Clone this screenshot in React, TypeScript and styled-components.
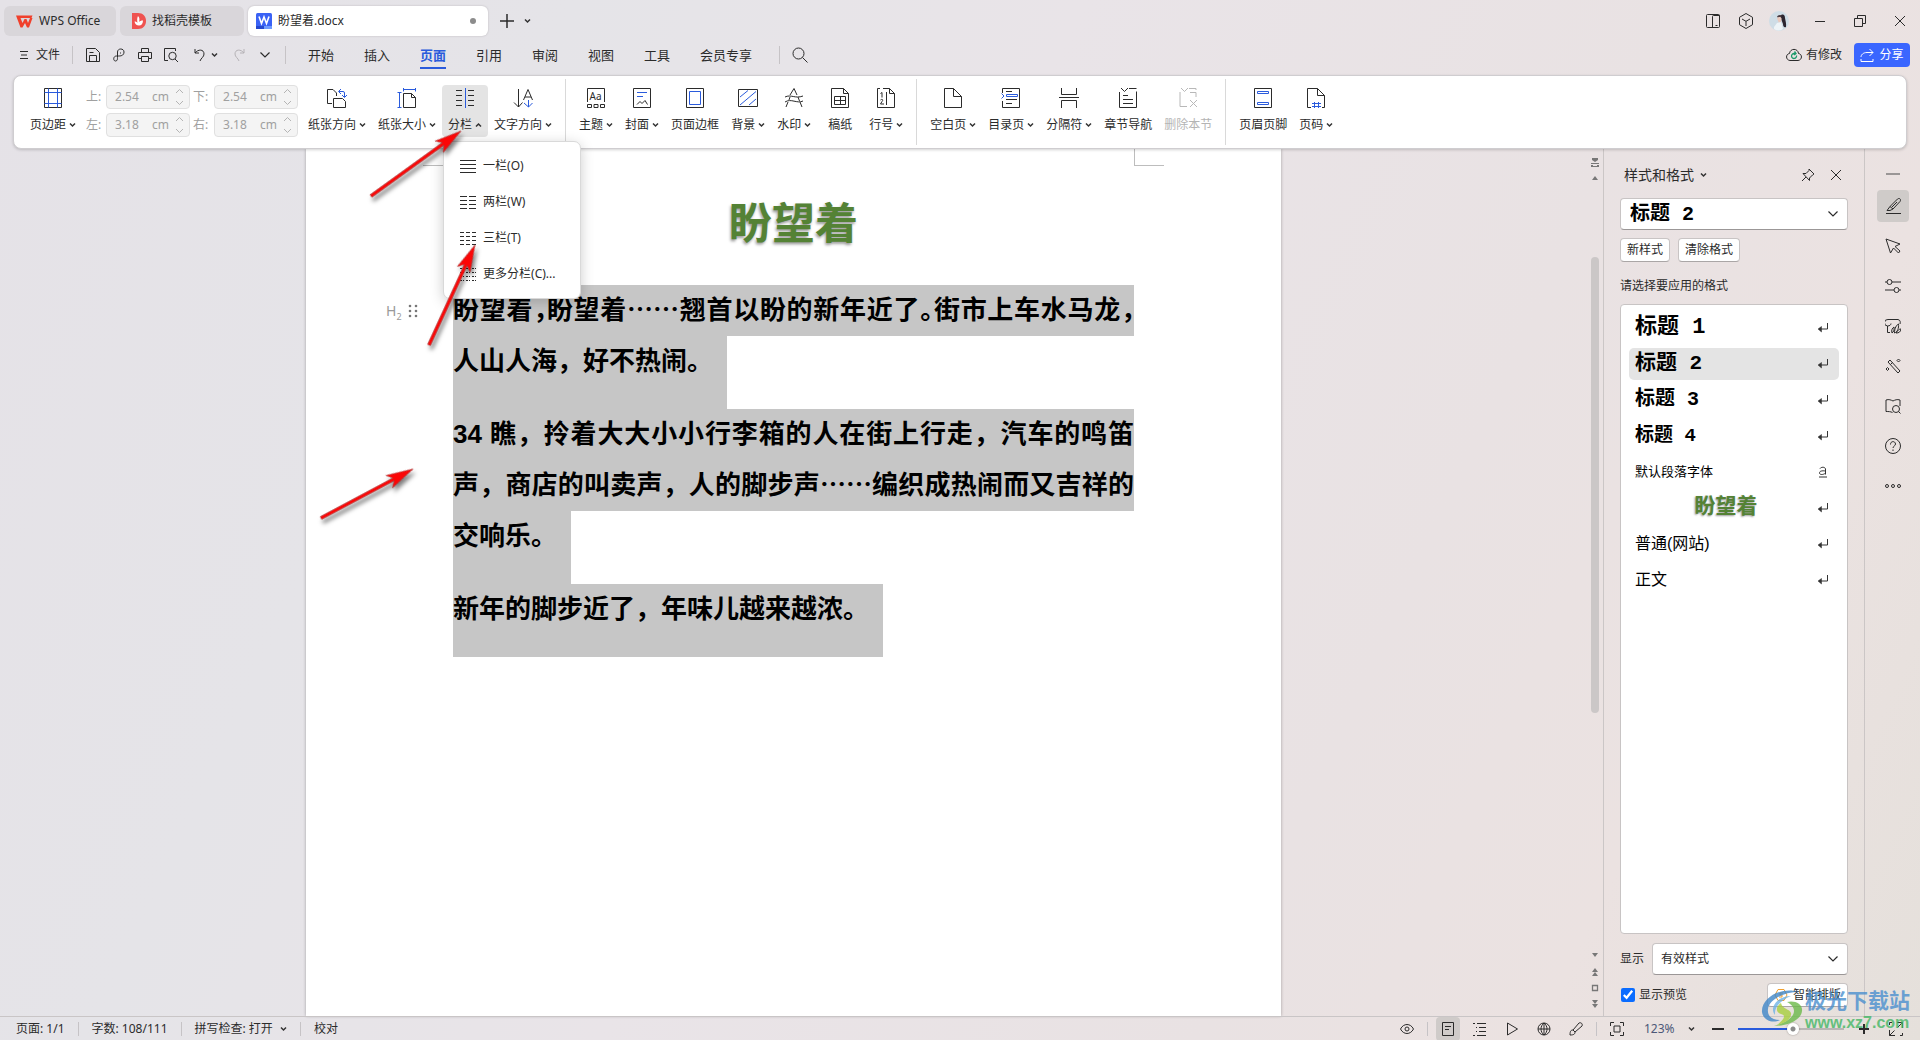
import React from "react";
import styled, { createGlobalStyle, css } from "styled-components";

const UI = `"Noto Sans", "Noto Sans CJK SC", sans-serif`;
const INK = "#2b2b2b";
const BLUE = "#2a5bdc";

const GlobalStyle = createGlobalStyle`
  * { box-sizing: border-box; }
  body { margin: 0; font-family: ${UI}; font-size: 12px; line-height: 16px; color: ${INK}; }
  button, input, select { font: inherit; color: inherit; margin: 0; }
  button { border: 0; background: none; padding: 0; cursor: pointer; }
  svg { display: block; flex: none; }
`;

/* ---------- shell ---------- */
const Shell = styled.div`
  position: relative;
  display: flex;
  flex-direction: column;
  height: 100vh;
  overflow: hidden;
  background: linear-gradient(115deg, #e5e2e7 0%, #e5e4e8 24%, #e9e4e8 45%, #e9e2e3 70%, #ebe2e1 84%, #e5e0db 100%);
`;
const Spacer = styled.div`flex: 1;`;
const Row = styled.div<{ $gap?: number }>`
  display: flex;
  align-items: center;
  gap: ${(p) => p.$gap ?? 0}px;
`;

/* ---------- title bar ---------- */
const TitleBar = styled.header`
  display: flex;
  align-items: center;
  height: 42px;
  padding-left: 4px;
`;
const FileTab = styled.button<{ $active?: boolean; $width: number }>`
  display: flex;
  align-items: center;
  gap: 6px;
  width: ${(p) => p.$width}px;
  height: 30px;
  margin-right: 4px;
  padding: 0 12px 0 ${(p) => (p.$active ? 8 : 12)}px;
  border-radius: 6px;
  background: ${(p) => (p.$active ? "#fff" : "#d9d6da")};
  box-shadow: ${(p) => (p.$active ? "0 0 2px #b5b2b6" : "none")};
`;
const Dot = styled.span`
  width: 6px;
  height: 6px;
  border-radius: 50%;
  background: #8c8c8c;
`;
const IconButton = styled.button<{ $width?: number; $height?: number; $on?: boolean }>`
  display: flex;
  align-items: center;
  justify-content: center;
  gap: 4px;
  width: ${(p) => p.$width ?? 24}px;
  height: ${(p) => p.$height ?? 24}px;
  border-radius: 4px;
  background: ${(p) => (p.$on ? "#cfcbc9" : "none")};
`;
const AccountTools = styled(Row)`margin-right: 5px;`;

/* ---------- menu row ---------- */
const MenuBar = styled.nav`
  display: flex;
  align-items: center;
  height: 33px;
  padding: 0 10px 7px 12px;
`;
const FileMenu = styled.button`
  display: flex;
  align-items: center;
  gap: 8px;
  width: 53px;
  padding-left: 8px;
`;
const Divider = styled.i<{ $height?: number; $space?: number }>`
  width: 1px;
  height: ${(p) => p.$height ?? 18}px;
  margin: 0 ${(p) => p.$space ?? 7}px;
  background: #c6c3c6;
`;
const MenuTab = styled.button<{ $active?: boolean }>`
  height: 28px;
  margin: 0 15px;
  padding-top: 2px;
  font-size: 13px;
  border-bottom: 2px solid ${(p) => (p.$active ? BLUE : "transparent")};
  color: ${(p) => (p.$active ? BLUE : INK)};
  font-weight: ${(p) => (p.$active ? 700 : 400)};
`;
const CloudState = styled.button`
  display: flex;
  align-items: center;
  gap: 4px;
  margin-right: 12px;
`;
const ShareButton = styled.button`
  display: flex;
  align-items: center;
  justify-content: center;
  gap: 5px;
  width: 56px;
  height: 24px;
  border-radius: 4px;
  background: #3a66ff;
  color: #fff;
`;

/* ---------- ribbon ---------- */
const Ribbon = styled.section`
  position: relative;
  z-index: 3;
  display: flex;
  height: 74px;
  margin: 0 13px;
  padding: 3px 10px;
  border: 1px solid #cfcdd0;
  border-radius: 8px;
  background: #fff;
  box-shadow: 0 1px 3px rgba(0, 0, 0, 0.18);
`;
const RibbonGroup = styled.div`
  display: flex;
  align-items: flex-start;
  padding: 6px 7px 0;
  border-right: 1px solid #d9d9d9;
  &:first-child { padding-left: 0; }
  &:last-child { border-right: 0; }
`;
const RibbonButton = styled.button<{ $on?: boolean; $off?: boolean }>`
  display: flex;
  flex-direction: column;
  align-items: center;
  gap: 9px;
  min-width: 46px;
  height: 52px;
  padding: 3px 6px 0;
  border-radius: 4px;
  background: ${(p) => (p.$on ? "#e4e4e4" : "none")};
  color: ${(p) => (p.$off ? "#b4b4b4" : INK)};
  white-space: nowrap;
`;
const MenuAnchor = styled.div`position: relative;`;
const MarginGrid = styled.div`
  display: grid;
  grid-template-columns: 17px 84px 18px 84px;
  column-gap: 3px;
  row-gap: 4px;
  align-items: center;
  width: 220px;
  padding-left: 4px;
  color: #a0a0a0;
`;
const Measure = styled.span`
  display: flex;
  align-items: center;
  height: 24px;
  padding: 0 5px 0 8px;
  border: 1px solid #e0e0e0;
  border-radius: 4px;
  background: #f4f4f4;
  input {
    width: 37px;
    padding: 0;
    border: 0;
    background: none;
  }
`;

/* ---------- drop-down ---------- */
const Dropdown = styled.ul`
  position: absolute;
  top: 56px;
  left: 1px;
  width: 138px;
  margin: 0;
  padding: 6px 0;
  list-style: none;
  border-radius: 7px;
  border: 1px solid #d9d9d9;
  background: #fff;
  box-shadow: 0 3px 14px rgba(0, 0, 0, 0.2);
`;
const DropdownItem = styled.button`
  display: flex;
  align-items: center;
  gap: 7px;
  width: 100%;
  height: 36px;
  padding-left: 16px;
`;

/* ---------- work area ---------- */
const Main = styled.main`
  display: flex;
  flex: 1;
  min-height: 0;
`;
const Canvas = styled.div`
  display: flex;
  flex: 1;
  justify-content: center;
  min-width: 0;
`;
const Page = styled.article`
  width: 975px;
  background: #fff;
  box-shadow: 0 0 3px rgba(0, 0, 0, 0.3);
`;
const CropRow = styled.div`
  display: flex;
  justify-content: space-between;
  padding: 0 117px;
`;
const CropMark = styled.i<{ $side: "left" | "right" }>`
  width: 30px;
  height: 17px;
  border-bottom: 1px solid #bdbdbd;
  ${(p) => (p.$side === "left" ? css`border-right: 1px solid #bdbdbd;` : css`border-left: 1px solid #bdbdbd;`)}
`;
const DocTitle = styled.h1`
  margin: 0;
  padding-bottom: 11px;
  font: 700 43px/108px "Noto Sans CJK SC", sans-serif;
  text-align: center;
  color: #548235;
  text-shadow: -1px 2px 3px rgba(0, 0, 0, 0.4);
`;
const DocBody = styled.div`
  display: grid;
  grid-template-columns: 147px 681px;
`;
const Gutter = styled.div`
  display: flex;
  align-items: center;
  gap: 6px;
  height: 51px;
  padding-left: 80px;
  font-size: 14px;
  color: #9a9a9a;
  sub { font-size: 9px; line-height: 0; }
`;
const Paragraph = styled.p`
  display: flex;
  flex-direction: column;
  align-items: flex-start;
  margin: 0;
  font: 700 26px/51px "Liberation Sans", "Noto Sans CJK SC", sans-serif;
  color: #000;
`;
const Line = styled.span<{ $last?: boolean }>`
  background: #c6c6c6;
  white-space: nowrap;
  ${(p) => (p.$last ? css`padding: 0 14px 22px 0;` : css`width: 100%; text-align-last: justify;`)}
`;
const HalfMark = styled.span`font-feature-settings: "halt";`;
const Ellipsis = styled.span`
  font-family: "Noto Sans CJK SC", sans-serif;
  line-height: 1;
`;

const ScrollRail = styled.div`
  display: flex;
  flex-direction: column;
  align-items: center;
  width: 16px;
  padding: 9px 0 7px;
`;
const ScrollThumb = styled.div`
  width: 8px;
  height: 456px;
  margin: 75px 0 auto;
  border-radius: 4px;
  background: #cbc7c7;
`;

/* ---------- style pane ---------- */
const Pane = styled.aside`
  display: flex;
  flex-direction: column;
  width: 262px;
  padding: 14px 16px 9px;
  border-left: 1px solid #cbc6c6;
  border-right: 1px solid #cbc6c6;
`;
const PaneHeader = styled.div`
  display: flex;
  align-items: center;
  gap: 4px;
  height: 24px;
  margin-bottom: 11px;
  padding-left: 4px;
  font-size: 14px;
`;
const PaneTitle = styled.button`
  display: flex;
  align-items: center;
  gap: 6px;
`;
const SelectBox = styled.div<{ $large?: boolean }>`
  position: relative;
  display: flex;
  flex: ${(p) => (p.$large ? "none" : 1)};
  height: 32px;
  select {
    width: 100%;
    padding: 0 28px 0 ${(p) => (p.$large ? 9 : 8)}px;
    border: 1px solid #c8c4c4;
    border-bottom-color: #9b9797;
    border-radius: 4px;
    background: #fff;
    appearance: none;
    ${(p) => p.$large && css`font: 700 20px "Liberation Mono", "Noto Sans CJK SC", sans-serif; color: #000;`}
  }
  svg { position: absolute; right: 9px; top: 10px; pointer-events: none; }
`;
const ActionRow = styled.div`
  display: flex;
  gap: 8px;
  margin-top: 8px;
`;
const SmallButton = styled.button`
  display: flex;
  align-items: center;
  gap: 5px;
  height: 24px;
  padding: 0 6px;
  border: 1px solid #c8c4c4;
  border-bottom-color: #aaa6a6;
  border-radius: 4px;
  background: #fff;
`;
const PaneCaption = styled.div`
  margin: 14px 0 8px;
  line-height: 20px;
`;
const StyleList = styled.ul`
  display: flex;
  flex-direction: column;
  flex: 1;
  gap: 4px;
  margin: 0 0 9px;
  padding: 7px 8px;
  list-style: none;
  border: 1px solid #c8c4c4;
  border-radius: 4px;
  background: #fff;
`;
const StyleItem = styled.button<{ $size: number; $bold?: boolean; $on?: boolean; $green?: boolean }>`
  display: flex;
  align-items: center;
  justify-content: space-between;
  width: 100%;
  height: 32px;
  padding: 0 10px 0 6px;
  border-radius: 5px;
  background: ${(p) => (p.$on ? "#e4e4e4" : "none")};
  font: ${(p) => (p.$bold ? 700 : 400)} ${(p) => p.$size}px/32px ${(p) => (p.$bold ? '"Liberation Mono"' : '"Liberation Sans"')}, "Noto Sans CJK SC", sans-serif;
  color: ${(p) => (p.$green ? "#548235" : "#000")};
  text-shadow: ${(p) => (p.$green ? "-1px 1px 2px rgba(0,0,0,.4)" : "none")};
  span { flex: 1; text-align: ${(p) => (p.$green ? "center" : "left")}; }
`;
const CheckLabel = styled.label`
  display: flex;
  align-items: center;
  gap: 4px;
  input { width: 14px; height: 14px; margin: 0 0 0 1px; accent-color: #0a6cff; }
`;
const ShowRow = styled(Row)`margin-bottom: 8px;`;
const SideBar = styled.aside`
  display: flex;
  flex-direction: column;
  align-items: center;
  gap: 8px;
  width: 55px;
  padding-top: 17px;
`;

/* ---------- status bar ---------- */
const StatusBar = styled.footer`
  display: flex;
  align-items: center;
  height: 24px;
  padding: 0 12px 0 16px;
  border-top: 1px solid #c9c5c6;
`;
const SpellButton = styled.button`
  display: flex;
  align-items: center;
  gap: 7px;
`;
const ZoomSelect = styled.div`
  position: relative;
  width: 61px;
  select { width: 100%; padding: 0 0 0 7px; border: 0; background: none; appearance: none; color: #4c5878; }
  svg { position: absolute; right: 3px; top: 5px; pointer-events: none; }
`;
const ZoomRange = styled.input`
  width: 106px;
  height: 12px;
  appearance: none;
  background: linear-gradient(to right, #2a5bdc 52%, #b9b5b4 52%) center / 100% 2px no-repeat;
  &::-webkit-slider-thumb {
    appearance: none;
    width: 12px;
    height: 12px;
    border-radius: 50%;
    background: radial-gradient(circle, #8b8b8b 0 2px, #fff 3px);
    box-shadow: 0 0 2px rgba(0, 0, 0, 0.4);
  }
`;

/* ---------- overlays ---------- */
const Arrows = styled.svg`
  position: absolute;
  top: 0;
  left: 0;
  z-index: 5;
  overflow: visible;
  pointer-events: none;
  filter: drop-shadow(2px 4px 2px rgba(0, 0, 0, 0.5));
`;
const Watermark = styled.div`
  position: absolute;
  right: 10px;
  bottom: 8px;
  z-index: 6;
  display: flex;
  align-items: center;
  gap: 2px;
  opacity: 0.8;
  pointer-events: none;
`;
const WatermarkText = styled.div`
  display: flex;
  flex-direction: column;
  b { font-size: 21px; line-height: 28px; color: #4b8fcf; }
  span { font: 700 16px/18px "Liberation Sans", sans-serif; color: #45b866; }
`;

/* ---------- icons ---------- */
type IcoProps = { children: React.ReactNode; size?: number; color?: string; box?: number };
const Ico = ({ children, size = 20, box, color = INK }: IcoProps) => (
  <svg width={size} height={size} viewBox={`0 0 ${box ?? size} ${box ?? size}`} fill="none" stroke={color} aria-hidden="true">
    {children}
  </svg>
);
const Caret = ({ up = false, color = "#333" }) => (
  <svg width="7" height="6" viewBox="0 0 7 6" fill="none" stroke={color} strokeWidth="1.5" aria-hidden="true">
    <path d={up ? "M1 4.5 3.5 2 6 4.5" : "M1 1.5 3.5 4 6 1.5"} />
  </svg>
);
const Chevron = () => <Ico size={12}><path d="M1.5 3.5 6 8l4.5-4.500" strokeWidth="1.2" /></Ico>;
const Close = () => <Ico size={12}><path d="m1 1 10 10M11 1 1 11" /></Ico>;
const Spinner = () => (
  <svg width="9" height="18" viewBox="0 0 9 18" fill="none" stroke="#b4b4b4" aria-hidden="true">
    <path d="m1 5 3.5-3.500L8 5M1 13l3.5 3.500L8 13" />
  </svg>
);

const icons = {
  margins: <Ico><path d="M1.5.5h17v19h-17z" /><path d="M5.5.5v19M14.5.5v19M1.5 4.5h17M1.5 15.5h17" stroke={BLUE} /></Ico>,
  orient: <Ico><path d="M5 15.5H.5V1.5h5.500l3.500 3.500v3" /><path d="M6.5 19.5v-9h9l3 3v6z" /><path d="M12 3.5h4a1.500 1.500 0 0 1 1.500 1.500v4M14 1l-2.500 2.500L14 6M15 7l2.500 2.500L20 7" stroke={BLUE} /></Ico>,
  size: <Ico><path d="M6.5 5.5h8l4 4v10h-12zM14.5 5.5v4h4" /><path d="M2.5 5v14.500M.5 4.5h4M.5 19.5h4M6 1.5h12.500M6.5 0v3.500M18.5 0v3.500" stroke={BLUE} /></Ico>,
  columns: <Ico><path d="M1 2.5h6M1 7.5h6M1 12.5h6M1 17.5h6M13 2.5h6M13 7.5h6M13 12.5h6M13 17.5h6" /><path d="M10.5 0v20" stroke={BLUE} /></Ico>,
  direction: <Ico><path d="M5.5 1v18M1 14.5l4.500 4.500 4-4.500M10.5 12 15 1.500 19.5 12M12 9h6" /><path d="M15.5 12v7M11 15l4.500 4 4-4" stroke={BLUE} /></Ico>,
  theme: <Ico><path d="M1.5 14V.5h17V14M1.5 16.5h4v3h-4zM8 16.5h4v3H8zM14.5 16.5h4v3h-4z" /><text x="3.500" y="11.500" fontSize="10" fill={INK} stroke="none" fontFamily={UI}>Aa</text></Ico>,
  cover: <Ico><path d="M1.5.5h17v19h-17z" /><path d="m5 16.500 3-3 2 2 3-3 2.500 4" /><path d="M5 4.5h10M5 8.5h6" stroke={BLUE} /></Ico>,
  border: <Ico><path d="M1.5.5h17v19h-17z" /><path d="M4.5 3.5h11v13h-11z" stroke={BLUE} /></Ico>,
  backdrop: <Ico><path d="M.5 1.5h19v17H.5z" /><path d="m2 9 8-6.500M2 17 18 3.500M11 17l7-6" stroke={BLUE} /></Ico>,
  mark: <Ico><path d="m6 7 4-6.500L13 7M4 14l-2 5M16 14l2 5M1 9c6-3 10 2 18-1M1 14c6-4 12 2 18-1M5 12l1-3M14 9l1.500 4" /></Ico>,
  draft: <Ico><path d="M1.5.5h12l5 5v14h-17zM13.5.5v5h5" /><path d="M4.5 8.5h11v8h-11zM4.5 12.5h11M10.5 8.5v8" /></Ico>,
  lineNo: <Ico><path d="M7 .5h6.500l5 5v14H1.500V.5H4M13.5.5v5h5M10.5 4v13" /><path d="M4.5 5.5 6 4.500v5M4.5 12c2-1.500 3 0 1.500 1.500L4.500 16H8" /></Ico>,
  blank: <Ico><path d="M1.5.5h9l8 8v11h-17zM10.5.5v8h8" /></Ico>,
  toc: <Ico><path d="M1.5 5V.5h17v19h-17V13M5 3.5h6M7 11.5h9M5 11.5h2M5 15.5h6" /><path d="M5.5 6.5h11v2h-11zM.5 5.5 3 8 .5 10.500" stroke={BLUE} /></Ico>,
  breakMark: <Ico><path d="M2.5 0v6.500h15V0M2.5 20v-7.500h15V20M0 9.5h20" /></Ico>,
  chapter: <Ico><path d="M1.5 4v15.500h17v-16M11 .5h7.500M3 0l3.500 3.500L10 0M5 7.5h5M5 11.5h10M5 15.5h10" /></Ico>,
  removeSec: <Ico color="#b8b8b8"><path d="M2 4v14.500h7M11 .5h7V2M12 4.5h6V9M3 0l3.500 3.500L10 0M12 12l7 7M19 12l-7 7" /></Ico>,
  headFoot: <Ico><path d="M1.5.5h17v19h-17z" /><path d="M4.5 3.5h11v2h-11zM4.5 14.5h11v2h-11z" stroke={BLUE} /></Ico>,
  pageNo: <Ico><path d="M5 19.5H1.500V.5h10l7 7v12H16M11.5.5v7h7" /><path d="M8.5 14v7M12.5 14v7M6 15.5h9M6 18.5h9" stroke={BLUE} /></Ico>,
};

const columnIcon = (cuts: number, dotted = false) => {
  const xs = cuts === 1 ? [[0, 16]] : cuts === 2 ? [[0, 7], [9, 16]] : [[0, 4], [6, 10], [12, 16]];
  return (
    <Ico size={16}>
      {[2, 6, 10, 14].map((y) => (
        <path key={y} strokeDasharray={dotted ? "2 1" : undefined} d={xs.map(([a, b]) => `M${a} ${y + 0.5}H${b}`).join("")} />
      ))}
    </Ico>
  );
};

const ReturnMark = () => (
  <Ico size={12} color="#333"><path d="M10.5 1v6H2" /><path d="M4.5 4.500 1 7l3.500 3z" fill="#333" strokeWidth=".5" /></Ico>
);

const collapseIcon = <Ico size={16}><path d="M1 8h14" strokeWidth="2" stroke="#9a9696" /></Ico>;
const sideIcons: [string, React.ReactNode][] = [
  ["样式", <Ico size={16}><path d="M1 15.5h15M2 12.5l3-4 3 2.500-3 1.500zM5 8.5 12.500 1c2-1.500 4 .5 2.500 2.500L8 11M7 9l5-5" /></Ico>],
  ["选择", <Ico size={16}><path d="m1 1 4.500 14 3-5 5 5 1.500-2-5-4.500 5-2.500z" /></Ico>],
  ["属性", <Ico size={16}><circle cx="4.500" cy="4" r="2.500" /><circle cx="11.500" cy="12" r="2.500" /><path d="M0 4h2M7 4h9M0 12h9M14 12h2" /></Ico>],
  ["素材", <Ico size={16}><path d="M5 14.5H2.500V8A3 3 0 0 1 3 1.500h10c2.500.5 2.500 3 2 4.500M2.5 8C5 8 6 6.500 6 5.500M7 15c-1-3 .5-5 2-6 .5 3-.5 5-2 6zM9.5 15c0-5 2-8 4-9 .5 4-1 8-4 9zM11 15c2-3 3-4 5-4-.5 3-2 4-5 4z" /></Ico>],
  ["工具", <Ico size={16}><path d="m3 4 2-2 10 11-2 2zM5.5 6.500l2-2M13.5 1 15 2.500 13.500 4 12 2.500zM2.5 9.500 4 11l-1.500 1.500L1 11z" /></Ico>],
  ["查找", <Ico size={16}><path d="M7.5 14.5c-2-1-4-1-6.500-1V2c3-1 5 0 7 1 2-1 4-2 7-1v6M15.5 15.500 13.500 13.500" /><circle cx="11" cy="11" r="3.500" /></Ico>],
  ["帮助", <Ico size={16}><circle cx="8" cy="8" r="7.500" /><path d="M5.5 6.500c0-4 5-3.500 5-.5 0 2-2.500 2-2.500 4M8 11.500v1.500" /></Ico>],
  ["更多", <Ico size={16}><circle cx="2" cy="8" r="1.500" /><circle cx="8" cy="8" r="1.500" /><circle cx="14" cy="8" r="1.500" /></Ico>],
];

/* ---------- parts ---------- */
const Tool = ({ icon, label, caret, up, on, off }: { icon: React.ReactNode; label: string; caret?: boolean; up?: boolean; on?: boolean; off?: boolean }) => (
  <RibbonButton $on={on} $off={off} disabled={off}>
    {icon}
    <Row $gap={3}>{label}{caret && <Caret up={up} />}</Row>
  </RibbonButton>
);

const MeasureField = ({ id, label, value }: { id: string; label: string; value: string }) => (
  <>
    <label htmlFor={id}>{label}</label>
    <Measure><input id={id} value={value} disabled readOnly />cm<Spacer /><Spinner /></Measure>
  </>
);

const styleRows = [
  { text: "标题 1", size: 22, bold: true },
  { text: "标题 2", size: 21, bold: true, on: true },
  { text: "标题 3", size: 20, bold: true },
  { text: "标题 4", size: 19, bold: true },
  { text: "默认段落字体", size: 13, char: true },
  { text: "盼望着", size: 21, bold: true, green: true },
  { text: "普通(网站)", size: 16 },
  { text: "正文", size: 16 },
];

const menuTabs = ["开始", "插入", "页面", "引用", "审阅", "视图", "工具", "会员专享"];

/* arrow drawn from its tail to its tip, with a barbed head */
const Arrow = ({ x1, y1, x2, y2 }: { x1: number; y1: number; x2: number; y2: number }) => {
  const len = Math.hypot(x2 - x1, y2 - y1);
  const deg = (Math.atan2(y2 - y1, x2 - x1) * 180) / Math.PI;
  return (
    <g transform={`translate(${x1} ${y1}) rotate(${deg})`}>
      <path d={`M0-1.5H${len - 22}L${len - 27}-7L${len} 0L${len - 27} 7L${len - 22} 1.5H0z`} fill="#fb0606" stroke="#a33" strokeWidth=".6" />
    </g>
  );
};

export default function App() {
  return (
    <Shell>
      <GlobalStyle />
      <TitleBar>
        <FileTab $width={112}>
          <svg width="17" height="13" viewBox="0 0 17 13" aria-hidden="true">
            <path d="M0 .5h16.500l-1 2.500H4.500l2 5 2-4h2l1.500 4L14 3h2.500L13 12.500h-2L9 8l-2.500 4.500h-2z" fill="#f0402c" />
          </svg>
          WPS Office
        </FileTab>
        <FileTab $width={124}>
          <svg width="14" height="16" viewBox="0 0 14 16" aria-hidden="true">
            <path d="M0 0h6c5 0 8 3.500 8 8s-3 8-8 8H0z" fill="#ef5350" />
            <path d="M6 3c2 2 1.500 4 1 6 1-1 2-1.500 4-1.500 0 3-1.500 5-4 5S3 11 2.500 8.500C4 8.500 5 9 5.500 10 5 7 5 5 6 3z" fill="#fff" />
          </svg>
          找稻壳模板
        </FileTab>
        <FileTab $width={240} $active>
          <svg width="16" height="16" viewBox="0 0 16 16" aria-hidden="true">
            <rect width="16" height="16" rx="1.500" fill="#3a62f5" />
            <path d="M8 13h8v3H8z" fill="#6f9bff" /><path d="M0 13h8v3H0z" fill="#2447cf" />
            <path d="m3 3.500 2.500 7L8 4l2.500 6.500 2.500-7" fill="none" stroke="#fff" strokeWidth="1.6" />
          </svg>
          盼望着.docx<Spacer /><Dot />
        </FileTab>
        <IconButton $width={30} aria-label="新建"><Ico size={14}><path d="M7 0v14M0 7h14" strokeWidth="1.5" /></Ico></IconButton>
        <IconButton $width={10} aria-label="标签列表"><Caret /></IconButton>
        <Spacer />
        <AccountTools $gap={1}>
          <IconButton $width={32} aria-label="分屏"><Ico size={14}><rect x=".5" y=".5" width="13" height="13" rx="1" /><path d="M6.5 13.500v-11a1 1 0 0 1 1-1h6M9.5 11.500h2" /></Ico></IconButton>
          <IconButton $width={32} aria-label="应用"><Ico size={16}><path d="m8 .5 6.500 3.800v7.400L8 15.500l-6.500-3.800V4.300zM4 6l4 2.300L12 6M8 8.300V13" /></Ico></IconButton>
          <IconButton $width={32} aria-label="账号">
            <svg width="20" height="20" viewBox="0 0 20 20" aria-hidden="true">
              <circle cx="10" cy="10" r="10" fill="#cfdde6" />
              <path d="M11 5c3-3 5-1 5 2 .5 3 1.500 6 1 9-2 1-3-1-3-3z" fill="#2d2630" />
              <path d="M8 6c1-2.500 4-2.500 5-1l-3 2z" fill="#4a3b40" />
              <path d="M8 7.500c1-2 4-2 4.500 0L12 11l-2 1z" fill="#e9c9bd" />
              <path d="m5 16 3-4 4-1 2 7c-3 2-6 2-9 0z" fill="#eef4f7" />
            </svg>
          </IconButton>
        </AccountTools>
        <IconButton $width={40} aria-label="最小化"><Ico size={12}><path d="M1 6.500h10" /></Ico></IconButton>
        <IconButton $width={40} aria-label="还原"><Ico size={12}><path d="M.5 3.500h8v8h-8zM3.5 3V.5h8v8H9" /></Ico></IconButton>
        <IconButton $width={40} aria-label="关闭"><Close /></IconButton>
      </TitleBar>

      <MenuBar>
        <FileMenu><Ico size={8}><path d="M0 .5h8M1 4h6M0 7.500h8" /></Ico>文件</FileMenu>
        <Divider />
        <Row>
          <IconButton $width={26} $height={26} aria-label="保存"><Ico size={14}><path d="M.5 13.500V.5h9l4 4v9zM3.5 13V7.500h7V13M3.5 4.500h4" /></Ico></IconButton>
          <IconButton $width={26} $height={26} aria-label="输出为PDF"><Ico size={14}><path d="M5.500 9.500V4C5.500 0 12 0 12 4s-4 4-5.500 4H4.500C1 8 1 13 3.500 13c2 0 2-2 2-3.500M8.500 4.500v1" /></Ico></IconButton>
          <IconButton $width={26} $height={26} aria-label="打印"><Ico size={14}><path d="M3.5 4.500v-4h7v4M3.5 10.500h-3v-6h13v6h-3M3.5 8.500h7v5h-7z" /></Ico></IconButton>
          <IconButton $width={26} $height={26} aria-label="打印预览"><Ico size={14}><path d="M4 12.500H.5V.5h11V3" /><circle cx="8.500" cy="8" r="3.700" /><path d="m11 11 3 3" /></Ico></IconButton>
          <IconButton $width={42} $height={26} aria-label="撤销"><Ico size={14}><path d="M2 1v4h4M2 5c3-4 9-4 9 1 0 3-3 4-4 7" /></Ico><Caret /></IconButton>
          <IconButton $width={26} $height={26} aria-label="恢复"><Ico size={14} color="#b5b2b6"><path d="M12 1v4H8M12 5C9 1 3 1 3 6c0 3 3 4 4 7" /></Ico></IconButton>
          <IconButton $width={26} $height={26} aria-label="更多命令"><Chevron /></IconButton>
        </Row>
        <Divider />
        {menuTabs.map((t) => <MenuTab key={t} $active={t === "页面"}>{t}</MenuTab>)}
        <Divider $space={12} />
        <button aria-label="搜索"><Ico size={16}><circle cx="6.500" cy="6.500" r="5.500" /><path d="m10.500 10.500 5 5" /></Ico></button>
        <Spacer />
        <CloudState>
          <Ico size={16}><path d="M4 13.500C-.5 13-.5 7 3.500 6.500 4 1 12 1 12.500 6.500c4 .5 4 6.500-.5 7z" /><path d="M10.5 8.500A2.500 2.500 0 1 1 8 6.500h1.500M8.5 4.500l1.500 2-2 1.500" stroke="#1a9a6a" strokeWidth="1.3" /></Ico>
          有修改
        </CloudState>
        <ShareButton><Ico size={14} color="#fff"><path d="M9.5 1 13 4.500 9.500 8M13 4.500H7C3 4.500 1 7 1 9M1 11v2.500h12V11" /></Ico>分享</ShareButton>
      </MenuBar>

      <Ribbon>
        <RibbonGroup>
          <Tool icon={icons.margins} label="页边距" caret />
          <MarginGrid>
            <MeasureField id="m-top" label="上:" value="2.54" />
            <MeasureField id="m-bottom" label="下:" value="2.54" />
            <MeasureField id="m-left" label="左:" value="3.18" />
            <MeasureField id="m-right" label="右:" value="3.18" />
          </MarginGrid>
          <Tool icon={icons.orient} label="纸张方向" caret />
          <Tool icon={icons.size} label="纸张大小" caret />
          <MenuAnchor>
            <Tool icon={icons.columns} label="分栏" caret up on />
            <Dropdown>
              <li><DropdownItem>{columnIcon(1)}一栏(O)</DropdownItem></li>
              <li><DropdownItem>{columnIcon(2)}两栏(W)</DropdownItem></li>
              <li><DropdownItem>{columnIcon(3)}三栏(T)</DropdownItem></li>
              <li><DropdownItem>{columnIcon(3, true)}更多分栏(C)...</DropdownItem></li>
            </Dropdown>
          </MenuAnchor>
          <Tool icon={icons.direction} label="文字方向" caret />
        </RibbonGroup>
        <RibbonGroup>
          <Tool icon={icons.theme} label="主题" caret />
          <Tool icon={icons.cover} label="封面" caret />
          <Tool icon={icons.border} label="页面边框" />
          <Tool icon={icons.backdrop} label="背景" caret />
          <Tool icon={icons.mark} label="水印" caret />
          <Tool icon={icons.draft} label="稿纸" />
          <Tool icon={icons.lineNo} label="行号" caret />
        </RibbonGroup>
        <RibbonGroup>
          <Tool icon={icons.blank} label="空白页" caret />
          <Tool icon={icons.toc} label="目录页" caret />
          <Tool icon={icons.breakMark} label="分隔符" caret />
          <Tool icon={icons.chapter} label="章节导航" />
          <Tool icon={icons.removeSec} label="删除本节" off />
        </RibbonGroup>
        <RibbonGroup>
          <Tool icon={icons.headFoot} label="页眉页脚" />
          <Tool icon={icons.pageNo} label="页码" caret />
        </RibbonGroup>
      </Ribbon>

      <Main>
        <Canvas>
          <Page>
            <CropRow><CropMark $side="left" /><CropMark $side="right" /></CropRow>
            <DocTitle>盼望着</DocTitle>
            <DocBody>
              <Gutter>
                <span>H<sub>2</sub></span>
                <svg width="10" height="14" viewBox="0 0 10 14" fill="#777" aria-hidden="true">
                  {[2, 7, 12].map((y) => <React.Fragment key={y}><circle cx="2" cy={y} r="1.3" /><circle cx="8" cy={y} r="1.3" /></React.Fragment>)}
                </svg>
              </Gutter>
              <div>
                <Paragraph>
                  <Line>盼望着<HalfMark>，</HalfMark>盼望着<Ellipsis>……</Ellipsis>翘首以盼的新年近了<HalfMark>。</HalfMark>街市上车水马龙<HalfMark>，</HalfMark></Line>
                  <Line $last>人山人海，好不热闹。</Line>
                </Paragraph>
                <Paragraph>
                  <Line>34 瞧，拎着大大小小行李箱的人在街上行走，汽车的鸣笛</Line>
                  <Line>声，商店的叫卖声，人的脚步声<Ellipsis>……</Ellipsis>编织成热闹而又吉祥的</Line>
                  <Line $last>交响乐。</Line>
                </Paragraph>
                <Paragraph>
                  <Line $last>新年的脚步近了，年味儿越来越浓。</Line>
                </Paragraph>
              </div>
            </DocBody>
          </Page>
        </Canvas>
        <ScrollRail>
          <svg width="8" height="24" viewBox="0 0 8 24" fill="#777" aria-hidden="true"><path d="M1 0h6v2L4 4 1 2zM0 5h8v1H0zM0 7h2v1h4V7h2v2H0zM4 18l3 4H1z" /></svg>
          <ScrollThumb />
          <svg width="8" height="56" viewBox="0 0 8 56" fill="#777" aria-hidden="true">
            <path d="M1 0h6L4 4zM4 15l3 4H1zM4 19l3 4H1zM1 47h6l-3 4zM1 51h6l-3 4z" /><path d="M1.5 32.500h5v5h-5z" fill="none" stroke="#777" strokeWidth="1.3" />
          </svg>
        </ScrollRail>

        <Pane>
          <PaneHeader>
            <PaneTitle>样式和格式<Caret /></PaneTitle>
            <Spacer />
            <IconButton aria-label="固定"><Ico size={14}><path d="M8 1l5 5-1.500 1L8.500 10v2.500L2 5.500h3L8 2.500zM5 9l-4 4" /></Ico></IconButton>
            <IconButton aria-label="关闭窗格"><Close /></IconButton>
          </PaneHeader>
          <SelectBox $large>
            <select aria-label="当前样式" defaultValue="h2"><option value="h2">标题 2</option></select>
            <Chevron />
          </SelectBox>
          <ActionRow>
            <SmallButton>新样式</SmallButton>
            <SmallButton>清除格式</SmallButton>
          </ActionRow>
          <PaneCaption>请选择要应用的格式</PaneCaption>
          <StyleList>
            {styleRows.map((r) => (
              <li key={r.text}>
                <StyleItem $size={r.size} $bold={r.bold} $on={r.on} $green={r.green}>
                  <span>{r.text}</span>
                  {r.char ? <Ico size={12} color="#333"><path d="M3 2.500c1-1.500 5-2 5.500.5v5.500M8.5 5C5 4.500 2.500 5 2.500 7s4 2 6 0M2 11h8" /></Ico> : <ReturnMark />}
                </StyleItem>
              </li>
            ))}
          </StyleList>
          <ShowRow $gap={8}>
            <label htmlFor="show-styles">显示</label>
            <SelectBox>
              <select id="show-styles" defaultValue="v"><option value="v">有效样式</option></select>
              <Chevron />
            </SelectBox>
          </ShowRow>
          <Row>
            <CheckLabel><input type="checkbox" defaultChecked />显示预览</CheckLabel>
            <Spacer />
            <SmallButton><Ico size={14} color="#f0a030"><path d="M4 1.500h6L13 7l-3 5.500H4L1 7z" /><path d="M9 5H6v2h2v2H5" /></Ico>智能排版</SmallButton>
          </Row>
        </Pane>
        <SideBar>
          <IconButton $width={32} $height={16} aria-label="收起">{collapseIcon}</IconButton>
          {sideIcons.map(([name, icon]) => (
            <IconButton key={name} $width={32} $height={32} $on={name === "样式"} aria-label={name}>{icon}</IconButton>
          ))}
        </SideBar>
      </Main>

      <StatusBar>
        <span>页面: 1/1</span><Divider $height={14} $space={13} />
        <span>字数: 108/111</span><Divider $height={14} $space={13} />
        <SpellButton>拼写检查: 打开<Caret /></SpellButton><Divider $height={14} $space={13} />
        <span>校对</span>
        <Spacer />
        <Row $gap={8}>
          <IconButton aria-label="护眼"><Ico size={14}><path d="M.5 7c3-6 10-6 13 0-3 6-10 6-13 0z" /><circle cx="7" cy="7" r="2" /></Ico></IconButton>
          <Divider $height={14} $space={0} />
          <IconButton $on aria-label="页面视图"><Ico size={14}><path d="M1.5.5h11v13h-11zM4 4.500h6M4 7.500h4" /></Ico></IconButton>
          <IconButton aria-label="大纲视图"><Ico size={14}><path d="M0 1.500h2M4 1.500h9M3 5.500h1M6 5.500h7M3 9.500h1M6 9.500h7M0 13.500h2M4 13.500h9" /></Ico></IconButton>
          <IconButton aria-label="阅读视图"><Ico size={14}><path d="m2.500 1 10 6-10 6z" /></Ico></IconButton>
          <IconButton aria-label="Web视图"><Ico size={14}><circle cx="7" cy="7" r="6" /><path d="M1 7h12M7 1v12M7 1c-4 3-4 9 0 12M7 1c4 3 4 9 0 12" /></Ico></IconButton>
          <IconButton aria-label="写作模式"><Ico size={14}><path d="M1 13c0-4 1-5 3-5l2 2c0 2-1 3-5 3zM4 8l6-7c2-1 4 1 3 3L6 10" /></Ico></IconButton>
          <Divider $height={14} $space={0} />
          <IconButton aria-label="适应页面"><Ico size={14}><path d="M.5 4V.5H4M10 .5h3.500V4M13.5 10v3.500H10M4 13.500H.5V10M4 4h6v6H4z" /></Ico></IconButton>
          <ZoomSelect><select aria-label="缩放比例" defaultValue="123"><option value="123">123%</option></select><Caret /></ZoomSelect>
          <IconButton aria-label="缩小"><Ico size={12}><path d="M0 6h12" strokeWidth="2" /></Ico></IconButton>
          <ZoomRange type="range" aria-label="缩放" defaultValue={52} />
          <IconButton aria-label="放大"><Ico size={10}><path d="M0 5h10M5 0v10" strokeWidth="2" /></Ico></IconButton>
          <IconButton aria-label="全屏"><Ico size={14}><path d="M8 .5h5.500V6M13.5.5 8.500 5.500M6 13.500H.5V8M.5 13.500l5-5M.5 3V.5H3M13.5 11v2.500H11" /></Ico></IconButton>
        </Row>
      </StatusBar>

      <Arrows width="1" height="1" aria-hidden="true">
        <Arrow x1={371} y1={196} x2={461} y2={131} />
        <Arrow x1={429} y1={345} x2={475} y2={245} />
        <Arrow x1={321} y1={518} x2={413} y2={469} />
      </Arrows>
      <Watermark>
        <svg width="42" height="42" viewBox="0 0 42 42" aria-hidden="true">
          <path d="M38 4C20-2 0 10 1 24c1 8 10 12 18 8-8 0-13-4-12-11C8 12 22 4 38 4z" fill="#3f86c8" />
          <path d="M30 8C16 8 8 20 14 27c-1-8 6-15 16-19z" fill="#6fb3e6" />
          <path d="M26 14c8-2 16 2 15 9-1 10-16 15-28 15 10-3 20-8 20-15 0-4-3-7-7-9z" fill="#6cba4b" />
          <path d="M20 15c-5 3-6 9 0 11 5 1 4 5-4 11 9-2 15-7 14-12-1-4-9-4-10-10z" fill="#a8cf3e" />
        </svg>
        <WatermarkText><b>极光下载站</b><span>www.xz7.com</span></WatermarkText>
      </Watermark>
    </Shell>
  );
}
